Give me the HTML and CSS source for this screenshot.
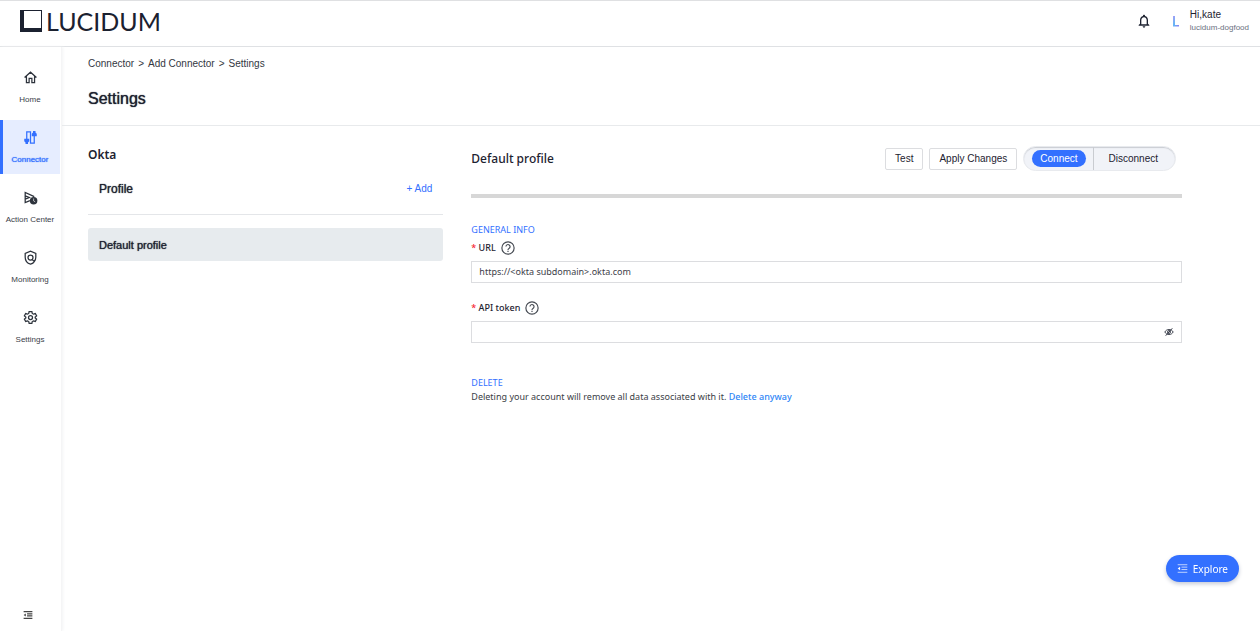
FILE: index.html
```html
<!DOCTYPE html>
<html lang="en">
<head>
<meta charset="utf-8">
<meta name="viewport" content="width=device-width, initial-scale=1">
<title>Settings - Lucidum</title>
<link rel="stylesheet" href="styles.css">
</head>
<body>
<header class="topbar">
  <a class="logo" href="#">
    <svg class="logo-mark" viewBox="0 0 22 22"><path fill="#1b2130" fill-rule="evenodd" d="M0 0H22V22H0ZM4 1V18H21V1Z"/></svg>
    <span>LUCIDUM</span>
  </a>
  <div class="account">
    <button class="icon-button" aria-label="Notifications">
      <svg class="bell" viewBox="0 0 24 24"><path fill="currentColor" d="M12 22c1.100 0 2-.9 2-2h-4c0 1.100.9 2 2 2zm6-6v-5c0-3.070-1.630-5.640-4.500-6.320V4c0-.83-.67-1.500-1.500-1.500s-1.500.67-1.500 1.500v.68C7.640 5.360 6 7.920 6 11v5l-2 2v1h16v-1l-2-2zm-2 1H8v-6c0-2.480 1.510-4.500 4-4.500s4 2.020 4 4.500v6z"/></svg>
    </button>
    <svg class="avatar" viewBox="0 0 8 12"><defs><linearGradient id="l" x1="0" y1="0" x2="1" y2="1"><stop offset="0" stop-color="#a99bf5"/><stop offset=".5" stop-color="#62b8f5"/><stop offset="1" stop-color="#8d7cf3"/></linearGradient></defs><path fill="url(#l)" d="M1 1H3V10H7V11.500H1Z"/></svg>
    <div class="who"><span class="who-name">Hi,kate</span><span class="who-org">lucidum-dogfood</span></div>
  </div>
</header>
<div class="shell">
  <nav class="sidebar">
    <a class="nav-item" href="#"><svg viewBox="0 0 24 24"><path d="M2.500 12 12 3.500 21.500 12M5.500 10V20H9.800V13.500H14.200V20H18.500V10"/></svg>Home</a>
    <a class="nav-item active" href="#"><svg viewBox="0 0 24 24"><path d="M6 15V3H12V21H18V9"/><path class="solid" d="M2 14H10V18L8 20V22.500H4V20L2 18ZM14 10H22V6L20 4V1.500H16V4L14 6Z"/></svg>Connector</a>
    <a class="nav-item" href="#"><svg viewBox="0 0 24 24"><path d="M11 17 3.500 20V4L18 10.500M3.500 9.500 10 12 3.500 14.500"/><circle class="solid" cx="17" cy="17" r="6"/><path class="hand" d="M17 13.500V17.500L19.500 19"/></svg>Action Center</a>
    <a class="nav-item" href="#"><svg viewBox="0 0 24 24"><path d="M17.500 19.500C16 21 14 22 12 22.500 6.500 21 3.500 16.500 3.500 11.500V5.500L12 2 20.500 5.500V11.500C20.500 14 19.500 16.500 18 18.500L14.500 15"/><circle cx="12" cy="12" r="4"/></svg>Monitoring</a>
    <a class="nav-item" href="#"><svg viewBox="0 0 24 24"><path d="M9.800 2.500H14.200L14.800 5.500 16.800 6.700 19.700 5.700 21.800 9.400 19.500 11.400V12.600L21.800 14.600 19.700 18.300 16.800 17.300 14.800 18.500 14.200 21.500H9.800L9.200 18.500 7.200 17.300 4.300 18.300 2.200 14.600 4.500 12.600V11.400L2.200 9.400 4.300 5.700 7.200 6.700 9.200 5.500Z"/><circle cx="12" cy="12" r="3.200"/></svg>Settings</a>
    <button class="icon-button collapse" aria-label="Collapse menu"><svg viewBox="0 0 16 16"><path d="M1 2.500H15M6.500 6H15M6.500 9.500H15M1 13.500H15"/><path class="solid" d="M1 8 4.500 5.500V10.500Z"/></svg></button>
  </nav>
  <main class="page">
    <div class="page-head">
      <div class="crumbs"><a href="#">Connector</a><span>&gt;</span><a href="#">Add Connector</a><span>&gt;</span><a href="#">Settings</a></div>
      <h1>Settings</h1>
    </div>
    <div class="columns">
      <section class="profiles">
        <h2>Okta</h2>
        <div class="profiles-head"><h3>Profile</h3><button class="add">+ Add</button></div>
        <button class="profile">Default profile</button>
      </section>
      <section class="detail">
        <div class="detail-head">
          <h2>Default profile</h2>
          <div class="actions">
            <button class="btn">Test</button>
            <button class="btn">Apply Changes</button>
            <div class="toggle"><button class="toggle-on"><span>Connect</span></button><button class="toggle-off">Disconnect</button></div>
          </div>
        </div>
        <form class="form">
          <h4>GENERAL INFO</h4>
          <div class="field">
            <div class="label-row"><label for="url"><b>*</b> URL</label><svg class="help" viewBox="0 0 24 24"><circle cx="12" cy="12" r="10.500"/><path d="M8.500 9.500A3.500 3.500 0 1 1 14.500 12C13 13.200 12 13.500 12 15.300M12 16.800V19"/></svg></div>
            <div class="control"><input id="url" type="text" value="https://&lt;okta subdomain&gt;.okta.com"></div>
          </div>
          <div class="field">
            <div class="label-row"><label for="token"><b>*</b> API token</label><svg class="help" viewBox="0 0 24 24"><circle cx="12" cy="12" r="10.500"/><path d="M8.500 9.500A3.500 3.500 0 1 1 14.500 12C13 13.200 12 13.500 12 15.300M12 16.800V19"/></svg></div>
            <div class="control"><input id="token" type="password"><button type="button" class="icon-button" aria-label="Show token"><svg class="eye" viewBox="0 0 24 24"><path d="M2 12C6 4 18 4 22 12 18 20 6 20 2 12ZM20 3 4 21"/><circle cx="12" cy="12" r="3.500"/></svg></button></div>
          </div>
          <h4>DELETE</h4>
          <p>Deleting your account will remove all data associated with it. <a href="#">Delete anyway</a></p>
        </form>
      </section>
    </div>
  </main>
</div>
<button class="explore"><svg viewBox="0 0 16 16"><path d="M1 2.500H15M6.500 6H15M6.500 9.500H15M1 13.500H15"/><path class="solid" d="M1 8 4.500 5.500V10.500Z"/></svg>Explore</button>
</body>
</html>
```
FILE: styles.css
```css
* { box-sizing: border-box; }
body {
  margin: 0;
  min-height: 100vh;
  display: flex;
  flex-direction: column;
  background: #fff;
  color: #1d2230;
  font: 10px/14px "Liberation Sans", Arial, sans-serif;
}
h1, h2, h3, h4, p { margin: 0; }
a { color: inherit; text-decoration: none; }
button { font: inherit; color: inherit; cursor: pointer; }
svg { display: block; fill: none; stroke: currentColor; stroke-width: 2; }
svg .solid { fill: currentColor; stroke: none; }
.icon-button { padding: 0; border: 0; background: none; }

.topbar {
  height: 47px;
  display: flex;
  align-items: center;
  justify-content: space-between;
  padding: 0 11px 6px 20px;
  border-top: 1px solid #dfe0e2;
  border-bottom: 1px solid #dfe1e4;
}
.logo { display: flex; align-items: center; gap: 4px; color: #1b2130; font: 25px/24px Lato, sans-serif; }
.logo-mark { width: 22px; height: 22px; stroke: none; }
.account { display: flex; align-items: center; }
.bell { width: 16px; height: 16px; stroke: none; }
.avatar { width: 8px; height: 12px; margin: 0 10px 0 20px; stroke: none; }
.who { display: flex; flex-direction: column; line-height: 13px; }
.who-org { font-size: 8px; color: #6a7180; }

.shell { flex: 1; display: flex; }
.sidebar {
  width: 62px;
  display: flex;
  flex-direction: column;
  gap: 6px;
  padding: 13px 1px 11px 0;
  border-right: 1px solid #f5f5f6;
  box-shadow: 1px 0 3px #f3f4f5;
}
.nav-item {
  height: 54px;
  display: flex;
  flex-direction: column;
  align-items: center;
  justify-content: space-between;
  padding: 10px 0 7px;
  color: #3b4048;
  font-size: 8px;
  line-height: 14px;
  white-space: nowrap;
}
.nav-item svg { width: 15px; height: 15px; color: #2d333c; }
.nav-item .hand { stroke: #fff; stroke-width: 1; }
.nav-item.active { background: #e6edff; color: #3370ff; box-shadow: inset 3px 0 #3370ff; text-shadow: 0 0 1px #3370ff; }
.nav-item.active svg { color: #3370ff; }
.collapse { margin: auto 0 0 23px; width: 10px; color: #444; }
.collapse svg { width: 10px; height: 10px; }

.page { flex: 1; min-width: 0; }
.page-head { padding: 10px 26px 15px; border-bottom: 1px solid #e8eaec; }
.crumbs { display: flex; gap: 4px; color: #33373f; }
h1 { margin-top: 17px; font-size: 16px; font-weight: 400; line-height: 22px; text-shadow: 0 0 1px #1d2230; }
.columns { display: grid; grid-template-columns: 1fr 2fr; gap: 28px; padding: 20px 78px 20px 26px; }
.profiles h2 { font: 600 12px/18px "Noto Sans", sans-serif; }
.profiles-head { display: flex; align-items: center; justify-content: space-between; height: 51px; border-bottom: 1px solid #e4e6e9; padding: 0 11px; }
.profiles h3 { font-size: 12px; font-weight: 400; text-shadow: 0 0 1px #1d2230; }
.add { padding: 0; border: 0; background: none; color: #3370ff; }
.profile { width: 100%; height: 33px; margin-top: 13px; padding: 0 11px; border: 0; border-radius: 3px; background: #e7ebee; text-align: left; font-size: 11px; text-shadow: 0 0 1px #1d2230; }

.detail-head { display: flex; align-items: center; justify-content: space-between; padding: 0 6px 23px 0; border-bottom: 4px solid #d7d7d7; }
.detail h2 { font: 500 12px/18px "Noto Sans", sans-serif; }
.actions { display: flex; align-items: center; gap: 6px; }
.btn { height: 22px; padding: 0 9px; border: 1px solid #dcdde0; border-radius: 2px; background: #fff; }
.toggle { display: flex; height: 25px; border: 1px solid #e8eaee; border-radius: 13px; background: #f1f3f8; box-shadow: inset 0 1px 1px #c9ccd2; }
.toggle button { border: 0; background: none; }
.toggle .toggle-on { padding: 0 7px 0 8px; }
.toggle-on span { display: block; height: 17px; padding: 0 8px; border-radius: 9px; background: #3370ff; color: #fff; line-height: 17px; }
.toggle .toggle-off { padding: 0 17px 0 15px; border-left: 1px solid #c9ccd1; }

.form { padding-top: 25px; font: 9px/14px "Noto Sans", sans-serif; }
.form h4 { font-weight: 400; color: #3370ff; }
.field { margin-bottom: 14px; }
.label-row { display: flex; align-items: center; gap: 5px; height: 24px; padding-bottom: 2px; }
.label-row label { font-weight: 500; }
.label-row b { color: #f5222d; font-weight: 500; }
.help { width: 14px; height: 14px; color: #454a52; }
.control { display: flex; align-items: center; height: 22px; border: 1px solid #dcdde0; padding: 0 7px; }
.control input { flex: 1; min-width: 0; padding: 0; border: 0; outline: 0; background: none; color: #3d4149; font: inherit; }
.eye { width: 10px; height: 10px; }
.field + h4 { margin-top: 33px; }
.form p { color: #3a3e46; }
.form p a { color: #2f86f6; font-weight: 500; }

.explore {
  position: fixed;
  right: 21px;
  bottom: 49px;
  display: flex;
  align-items: center;
  gap: 5px;
  height: 27px;
  padding: 0 11px;
  border: 0;
  border-radius: 14px;
  background: #3370ff;
  color: #fff;
  box-shadow: 0 2px 4px #c5cad6;
  font: 10px/16px "Noto Sans", sans-serif;
}
.explore svg { width: 11px; height: 11px; stroke-width: 1; }
```
